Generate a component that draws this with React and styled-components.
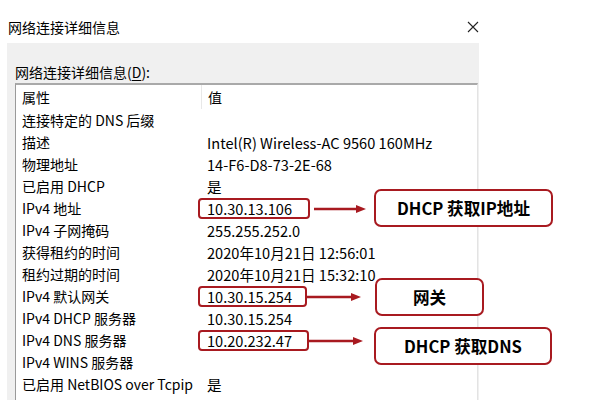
import styled, { createGlobalStyle } from "styled-components";

const Global = createGlobalStyle`
  html, body {
    margin: 0;
    padding: 0;
    background: #ffffff;
  }
  body {
    font-family: "Noto Sans CJK SC", sans-serif;
    color: #000;
  }
`;

const Page = styled.div`
  position: relative;
  width: 597px;
  height: 400px;
  overflow: hidden;
  background: #ffffff;
`;

const TitleBar = styled.div`
  box-sizing: border-box;
  height: 43px;
  padding: 11px 0 0 8px;
  display: flex;
  align-items: center;
  justify-content: space-between;
  width: 483px;
`;

const Title = styled.span`
  font-size: 14px;
  line-height: 32px;
`;

const Close = styled.span`
  display: flex;
  width: 20px;
  height: 20px;
  align-items: center;
  justify-content: center;
`;

const Panel = styled.div`
  box-sizing: border-box;
  margin-left: 7px;
  width: 472px;
  height: 357px;
  background: #f0f0f0;
  padding: 19px 1px 0 8px;
`;

const Label = styled.div`
  font-size: 14px;
  line-height: 20px;
  height: 21px;

  u {
    text-decoration: underline;
    text-underline-offset: 2px;
  }
`;

const ListBox = styled.div`
  background: #ffffff;
  border-top: 2px solid #a9a9a9;
  border-left: 1px solid #9a9a9a;
  border-right: 1px solid #e3e3e3;
  height: 320px;
`;

const Row = styled.div`
  display: grid;
  grid-template-columns: 185px 1fr;
  height: ${(p) => (p.$header ? 24 : 22)}px;
  align-items: center;
  font-size: 14px;
  white-space: nowrap;
`;

const Cell = styled.div`
  box-sizing: border-box;
  height: 100%;
  padding-left: 6px;
  display: flex;
  align-items: center;
  font-size: ${(p) => (p.$value ? 14.6 : 14)}px;
  border-left: ${(p) => (p.$sep ? "1px solid #e8e8e8" : "none")};
`;

const Mark = styled.span`
  box-sizing: border-box;
  display: inline-flex;
  align-items: center;
  height: 21px;
  margin-left: -9px;
  padding: 0 ${(p) => p.$pad}px 0 7px;
  border: 2px solid #a81a20;
  border-radius: 4px;
`;

const Callout = styled.div`
  position: absolute;
  box-sizing: border-box;
  left: ${(p) => p.$x}px;
  top: ${(p) => p.$y}px;
  width: ${(p) => p.$w}px;
  height: 38px;
  border: 2px solid #a81a20;
  border-radius: 7px;
  background: #ffffff;
  display: flex;
  align-items: center;
  justify-content: center;
  font-size: 16.6px;
  font-weight: 700;
`;

const Arrow = styled.svg`
  position: absolute;
  left: ${(p) => p.$x}px;
  top: ${(p) => p.$y - 5}px;
`;

const rows = [
  ["连接特定的 DNS 后缀", ""],
  ["描述", "Intel(R) Wireless-AC 9560 160MHz"],
  ["物理地址", "14-F6-D8-73-2E-68"],
  ["已启用 DHCP", "是"],
  ["IPv4 地址", "10.30.13.106", 16],
  ["IPv4 子网掩码", "255.255.252.0"],
  ["获得租约的时间", "2020年10月21日 12:56:01"],
  ["租约过期的时间", "2020年10月21日 15:32:10"],
  ["IPv4 默认网关", "10.30.15.254", 13],
  ["IPv4 DHCP 服务器", "10.30.15.254"],
  ["IPv4 DNS 服务器", "10.20.232.47", 15],
  ["IPv4 WINS 服务器", ""],
  ["已启用 NetBIOS over Tcpip", "是"],
  ["连接-本地 IPv6 地址", "fe80::b1c4:9a2e:6d1f:3c2a%12"],
];

const notes = [
  { arrow: [314, 209, 52], box: [374, 189, 179], text: "DHCP 获取IP地址" },
  { arrow: [307, 297, 54], box: [375, 278, 109], text: "网关" },
  { arrow: [309, 341, 54], box: [374, 327, 178], text: "DHCP 获取DNS" },
];

function ArrowLine({ x, y, len }) {
  return (
    <Arrow $x={x} $y={y} width={len} height="10" viewBox={`0 0 ${len} 10`}>
      <line x1="0" y1="5" x2={len - 8} y2="5" stroke="#a81a20" strokeWidth="2.4" />
      <polygon points={`${len - 10},1 ${len},5 ${len - 10},9`} fill="#a81a20" />
    </Arrow>
  );
}

export default function App() {
  return (
    <Page>
      <Global />
      <TitleBar>
        <Title>网络连接详细信息</Title>
        <Close>
          <svg width="12" height="12" viewBox="0 0 12 12">
            <path d="M1 1 L11 11 M11 1 L1 11" stroke="#222" strokeWidth="1.1" />
          </svg>
        </Close>
      </TitleBar>
      <Panel>
        <Label>
          网络连接详细信息(<u>D</u>):
        </Label>
        <ListBox>
          <Row $header>
            <Cell>属性</Cell>
            <Cell $sep>值</Cell>
          </Row>
          {rows.map(([name, value, pad]) => (
            <Row key={name}>
              <Cell>{name}</Cell>
              <Cell $value>{pad ? <Mark $pad={pad}>{value}</Mark> : value}</Cell>
            </Row>
          ))}
        </ListBox>
      </Panel>
      {notes.map((n) => (
        <div key={n.text}>
          <ArrowLine x={n.arrow[0]} y={n.arrow[1]} len={n.arrow[2]} />
          <Callout $x={n.box[0]} $y={n.box[1]} $w={n.box[2]}>
            {n.text}
          </Callout>
        </div>
      ))}
    </Page>
  );
}
